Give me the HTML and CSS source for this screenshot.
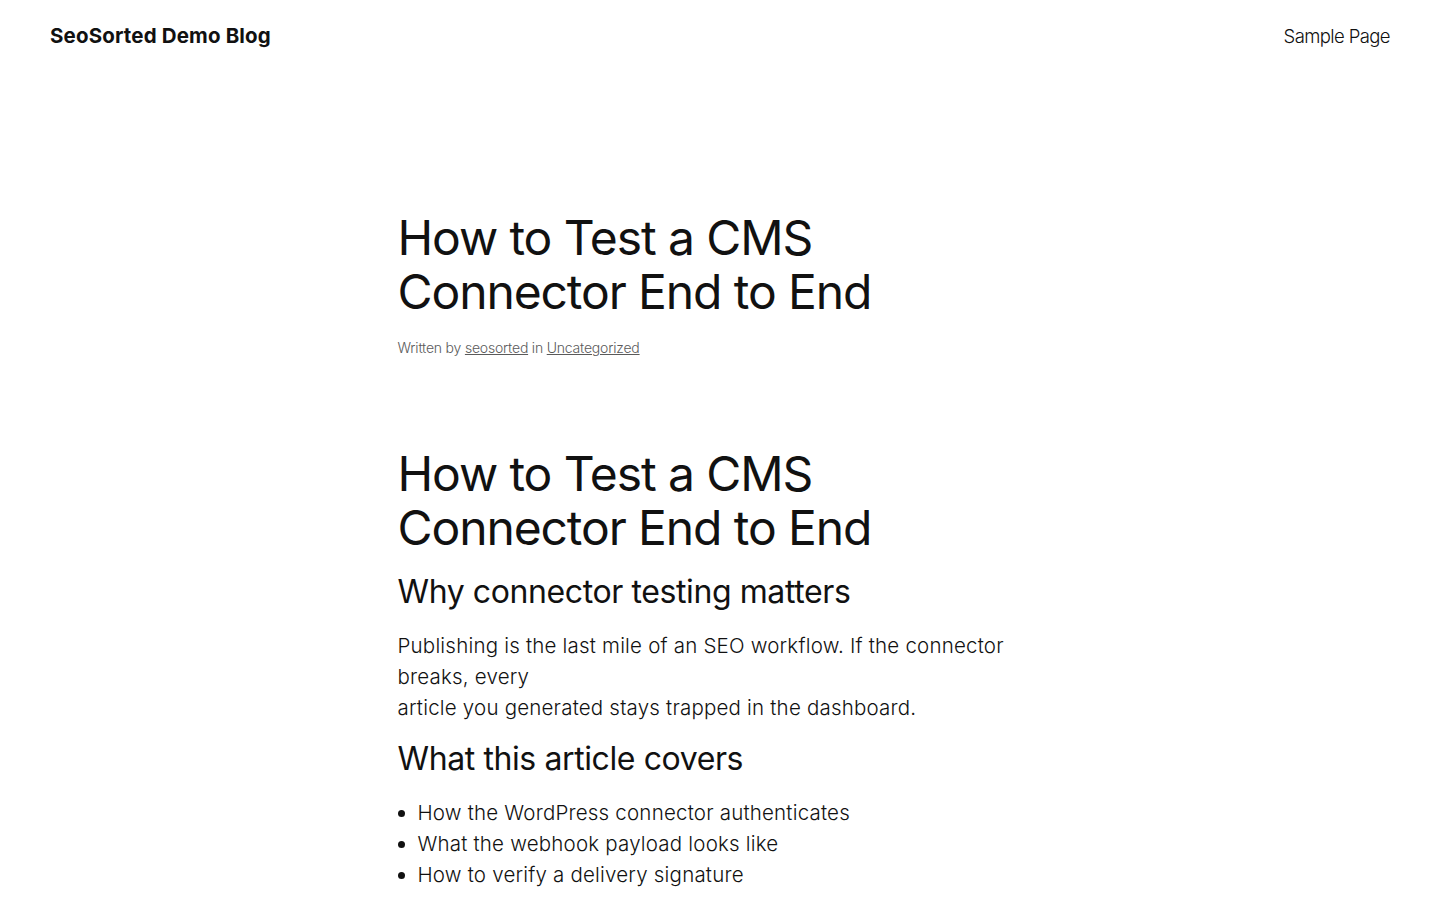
FILE: index.html
```html
<!DOCTYPE html>
<html lang="en">
<head>
<meta charset="utf-8">
<title>How to Test a CMS Connector End to End – SeoSorted Demo Blog</title>
<link rel="stylesheet" href="styles.css">
</head>
<body>
<header class="site-header">
  <a class="site-title" href="#">SeoSorted Demo Blog</a>
  <nav class="site-nav"><a href="#">Sample Page</a></nav>
</header>
<main class="post">
  <h1 class="post-title">How to Test a CMS Connector End to End</h1>
  <div class="post-meta">Written by <a href="#">seosorted</a> in <a href="#">Uncategorized</a></div>
  <div class="post-content">
    <h1>How to Test a CMS Connector End to End</h1>
    <h2>Why connector testing matters</h2>
    <p>Publishing is the last mile of an SEO workflow. If the connector breaks, every<br>article you generated stays trapped in the dashboard.</p>
    <h2>What this article covers</h2>
    <ul>
      <li>How the WordPress connector authenticates</li>
      <li>What the webhook payload looks like</li>
      <li>How to verify a delivery signature</li>
    </ul>
  </div>
</main>
</body>
</html>
```
FILE: styles.css
```css
html, body {
  margin: 0;
  padding: 0;
  background: #ffffff;
}
body {
  font-family: Inter, "Noto Sans", sans-serif;
  color: #111111;
  font-size: 20.5px;
  line-height: 1.5;
  letter-spacing: 0.2px;
}
a {
  color: inherit;
}
.site-header {
  height: 72px;
  padding: 0 50px;
  display: flex;
  align-items: center;
  justify-content: space-between;
}
.site-title {
  font-size: 20.5px;
  font-weight: 700;
  text-decoration: none;
  letter-spacing: 0.15px;
}
.site-nav a {
  font-size: 18.5px;
  font-weight: 300;
  text-decoration: none;
  letter-spacing: -0.6px;
}
.post {
  width: 645px;
  margin: 0 auto;
  padding-top: 139px;
}
h1, h2 {
  font-weight: 400;
  margin: 0;
  line-height: 1.125;
}
.post-title, .post-content h1 {
  font-size: 48px;
  letter-spacing: -1.1px;
}
.post-meta {
  margin-top: 19px;
  font-size: 14px;
  line-height: 20px;
  color: #5a5a5a;
  font-weight: 300;
  letter-spacing: -0.2px;
}
.post-meta a {
  color: #5a5a5a;
}
.post-content {
  margin-top: 89px;
  display: flex;
  flex-direction: column;
  gap: 19.2px;
}
.post-content h2 {
  font-size: 32px;
  letter-spacing: -0.4px;
}
.post-content p {
  margin: 2px 0 -2px;
  font-weight: 300;
}
.post-content ul {
  margin: 2px 0 0;
  padding-left: 20px;
  font-weight: 300;
}
```
